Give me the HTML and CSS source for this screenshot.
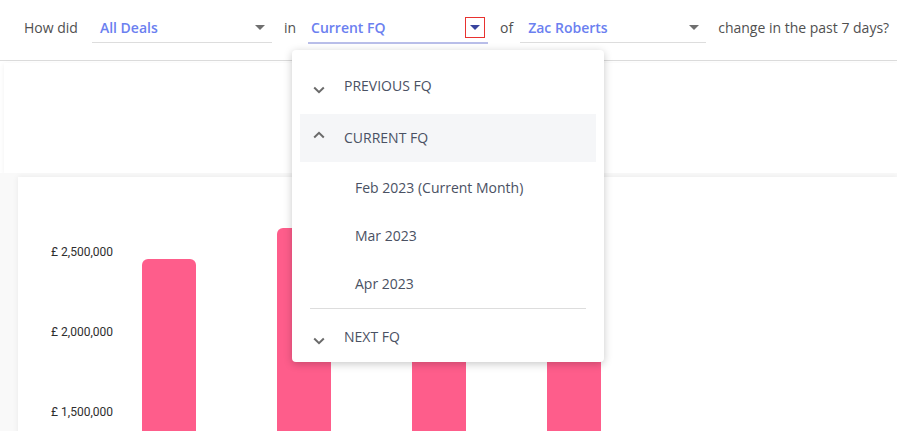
FILE: index.html
```html
<!DOCTYPE html>
<html lang="en">
<head>
<meta charset="utf-8">
<title>Deals change</title>
<link rel="stylesheet" href="styles.css">
</head>
<body>
<header class="query-bar">
  <span class="q-text">How did</span>
  <div class="select select-first">
    <span class="select-value">All Deals</span>
    <span class="caret-box"><span class="caret"></span></span>
  </div>
  <span class="q-text">in</span>
  <div class="select select-active">
    <span class="select-value">Current FQ</span>
    <span class="caret-box caret-box-focus"><span class="caret"></span></span>
  </div>
  <span class="q-text">of</span>
  <div class="select select-wide">
    <span class="select-value">Zac Roberts</span>
    <span class="caret-box"><span class="caret"></span></span>
  </div>
  <span class="q-text">change in the past 7 days?</span>
</header>

<div class="summary-card"></div>

<section class="chart-section">
  <div class="chart-card">
    <div class="y-axis">
      <span class="y-label">£ 2,500,000</span>
      <span class="y-label">£ 2,000,000</span>
      <span class="y-label">£ 1,500,000</span>
    </div>
    <div class="bars">
      <div class="bar" style="height:233px"></div>
      <div class="bar" style="height:264px"></div>
      <div class="bar" style="height:250px"></div>
      <div class="bar" style="height:215px"></div>
    </div>
  </div>
</section>

<div class="menu">
  <div class="menu-row">
    <svg class="chev chev-down" width="12" height="8" viewBox="0 0 12 8"><path d="M1.2 1.5 L6 6.2 L10.8 1.5" fill="none" stroke="#6a6a6a" stroke-width="2"/></svg>
    <span class="menu-label">PREVIOUS FQ</span>
  </div>
  <div class="menu-row menu-row-open">
    <svg class="chev chev-up" width="12" height="8" viewBox="0 0 12 8"><path d="M1.2 6.5 L6 1.8 L10.8 6.5" fill="none" stroke="#6a6a6a" stroke-width="2"/></svg>
    <span class="menu-label">CURRENT FQ</span>
  </div>
  <div class="menu-sub">Feb 2023 (Current Month)</div>
  <div class="menu-sub">Mar 2023</div>
  <div class="menu-sub">Apr 2023</div>
  <div class="menu-divider"></div>
  <div class="menu-row">
    <svg class="chev chev-down" width="12" height="8" viewBox="0 0 12 8"><path d="M1.2 1.5 L6 6.2 L10.8 1.5" fill="none" stroke="#6a6a6a" stroke-width="2"/></svg>
    <span class="menu-label">NEXT FQ</span>
  </div>
</div>
</body>
</html>
```

FILE: styles.css
```css
* { box-sizing: border-box; }

html, body {
  margin: 0;
  padding: 0;
  overflow: hidden;
  background: #ffffff;
  font-family: "Open Sans", "Noto Sans", sans-serif;
  font-size: 14px;
}

body {
  position: relative;
  height: 431px;
}

.query-bar {
  display: flex;
  align-items: flex-start;
  gap: 12px;
  height: 61px;
  padding: 14px 0 0 24px;
  border-bottom: 1px solid #dcdcdc;
}

.q-text {
  line-height: 28px;
  color: #505050;
  white-space: nowrap;
}

.select {
  display: flex;
  align-items: center;
  justify-content: space-between;
  width: 180px;
  height: 29px;
  padding: 0 2px 0 8px;
  border-bottom: 1px solid #dddddd;
}

.select-first {
  margin-left: 2px;
}

.select-active {
  height: 30px;
  padding: 0 3px 0 3px;
  border-bottom: 2px solid #b9bee9;
}

.select-wide {
  width: 186px;
  margin-left: -5px;
}

.select-value {
  line-height: 28px;
  color: #6b80f0;
  font-weight: 600;
}

.caret-box {
  display: flex;
  align-items: center;
  justify-content: center;
  width: 20px;
  height: 21px;
  margin-top: -1px;
}

.caret-box-focus {
  border: 1px solid #e8322f;
}

.caret {
  width: 0;
  height: 0;
  border-left: 5px solid transparent;
  border-right: 5px solid transparent;
  border-top: 5px solid #6f6f6f;
}

.select-active .caret {
  border-top-color: #38449e;
}

.summary-card {
  height: 110px;
  margin: 2px 0 0 4px;
  background: #ffffff;
  box-shadow: 0 1px 5px rgba(0, 0, 0, 0.06);
}

.chart-section {
  background: #f9f9f9;
  padding: 4px 0 0 18px;
  height: 262px;
  overflow: hidden;
}

.chart-card {
  display: flex;
  height: 400px;
  background: #ffffff;
  box-shadow: 0 0 6px rgba(0, 0, 0, 0.07);
}

.y-axis {
  display: flex;
  flex-direction: column;
  align-items: flex-end;
  gap: 60px;
  width: 95px;
  padding-top: 65px;
  font-family: Roboto, "Liberation Sans", sans-serif;
  font-size: 12px;
  color: #2e2e2e;
}

.y-label {
  line-height: 20px;
  white-space: nowrap;
}

.bars {
  display: flex;
  align-items: flex-end;
  gap: 81px;
  height: 315px;
  padding-left: 29px;
}

.bar {
  width: 54px;
  background: #fe5d8b;
  border-radius: 6px 6px 0 0;
}

.menu {
  position: absolute;
  left: 292px;
  top: 50px;
  width: 312px;
  padding: 12px 8px 1px;
  background: #ffffff;
  border-radius: 4px;
  box-shadow: 0 2px 8px rgba(0, 0, 0, 0.22);
  color: #4a5163;
}

.menu-row {
  display: flex;
  align-items: center;
  height: 48px;
  padding-left: 13px;
}

.menu-row-open {
  margin: 4px 0 2px;
  background: #f5f6f8;
}

.chev {
  flex: none;
  width: 12px;
  height: 8px;
}

.chev-down { margin-top: 8px; }
.chev-up { margin-top: -7px; }

.menu-label {
  margin-left: 19px;
  line-height: 20px;
}

.menu-sub {
  height: 48px;
  line-height: 48px;
  padding-left: 55px;
}

.menu-divider {
  height: 1px;
  margin: 0 10px 4px;
  background: #dddddd;
}
```
